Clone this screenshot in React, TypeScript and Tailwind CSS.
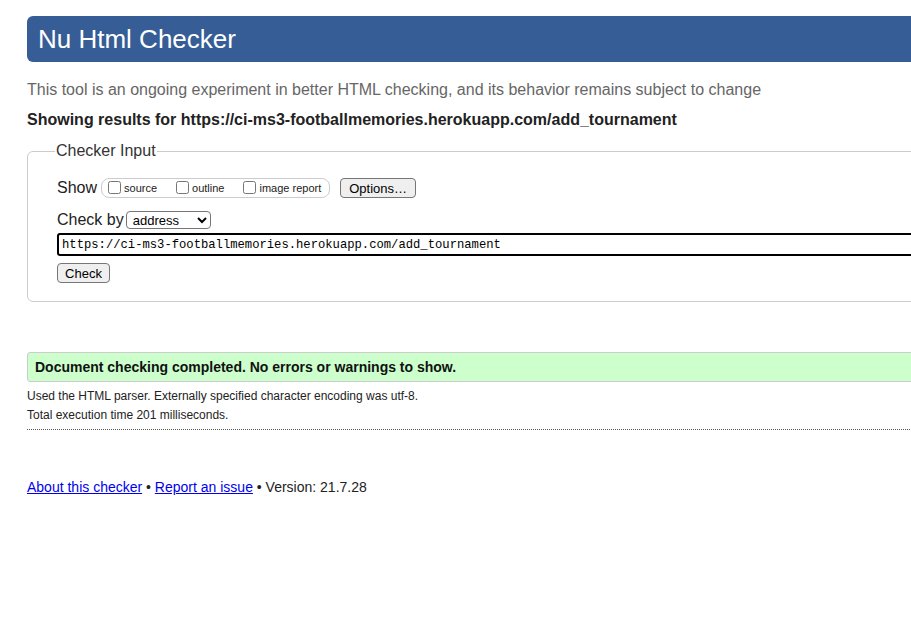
export default function App() {
  return (
    <div className="w-[911px] h-[621px] overflow-hidden bg-white font-['Liberation_Sans',Arial,sans-serif]">
      <div className="w-[1100px] pl-[27px] pt-4">
        <h1 className="h-[46px] bg-[#365d95] rounded-l-md text-white text-[26px] leading-[46px] pl-[11px]">
          Nu Html Checker
        </h1>
        <p className="text-[#666] text-base mt-[18px] leading-5">
          This tool is an ongoing experiment in better HTML checking, and its behavior remains subject to change
        </p>
        <p className="font-bold text-[#222] text-base mt-[10px] leading-5">
          Showing results for https://ci-ms3-footballmemories.herokuapp.com/add_tournament
        </p>
        <fieldset className="mt-[9px] border border-[#ccc] rounded-l-md pl-[29px] pt-[13px] pb-[18px]">
          <legend className="text-[#333] text-base px-[1px] -ml-[2px]">Checker Input</legend>
          <div className="flex items-center h-[24px]">
            <span className="text-base text-[#222] mr-[4px]">Show</span>
            <span className="flex items-center h-[20px] border border-[#ccc] rounded-lg pl-[6px] pr-[8px] text-[11px] text-[#222]">
              <label className="flex items-center mr-[19px]">
                <input type="checkbox" className="w-[13px] h-[13px] mr-[3px] -mt-[2px]" />
                source
              </label>
              <label className="flex items-center mr-[19px]">
                <input type="checkbox" className="w-[13px] h-[13px] mr-[3px] -mt-[2px]" />
                outline
              </label>
              <label className="flex items-center">
                <input type="checkbox" className="w-[13px] h-[13px] mr-[3px] -mt-[2px]" />
                image report
              </label>
            </span>
            <button className="ml-[10px] h-[20px] px-[8px] border border-[#767676] rounded-sm bg-[#efefef] text-[13px] text-black">
              Options…
            </button>
          </div>
          <div className="flex items-center mt-[9px] h-[22px]">
            <span className="text-base text-[#222] mr-[2px]">Check by</span>
            <select className="w-[85px] h-[18px] border border-[#767676] rounded-sm text-[13px] text-black pl-[2px]">
              <option>address</option>
            </select>
          </div>
          <input
            readOnly
            value="https://ci-ms3-footballmemories.herokuapp.com/add_tournament"
            className="mt-[2px] block w-full h-[23px] border-2 border-black rounded-[3px] px-[3px] text-[12.2px] text-black font-['Liberation_Mono','DejaVu_Sans_Mono',monospace] outline-none"
          />
          <button className="mt-[7px] block h-[20px] w-[53px] border border-[#767676] rounded-sm bg-[#efefef] text-[13px] text-black">
            Check
          </button>
        </fieldset>
        <div className="mt-[50px] h-[30px] bg-[#ccffcc] border border-[#ccc] rounded-l-[3px] pl-[7px] flex items-center font-bold text-[14px] text-[#111]">
          Document checking completed. No errors or warnings to show.
        </div>
        <p className="text-xs text-[#222] mt-[5px] leading-[19px]">
          Used the HTML parser. Externally specified character encoding was utf-8.
        </p>
        <p className="text-xs text-[#222] leading-[19px]">Total execution time 201 milliseconds.</p>
        <div className="mt-[4px] border-t border-dotted border-[#555]" />
        <p className="mt-[47px] text-sm text-[#222]">
          <a href="#" className="text-[#00e] underline">About this checker</a> •{" "}
          <a href="#" className="text-[#00e] underline">Report an issue</a> • Version: 21.7.28
        </p>
      </div>
    </div>
  )
}
